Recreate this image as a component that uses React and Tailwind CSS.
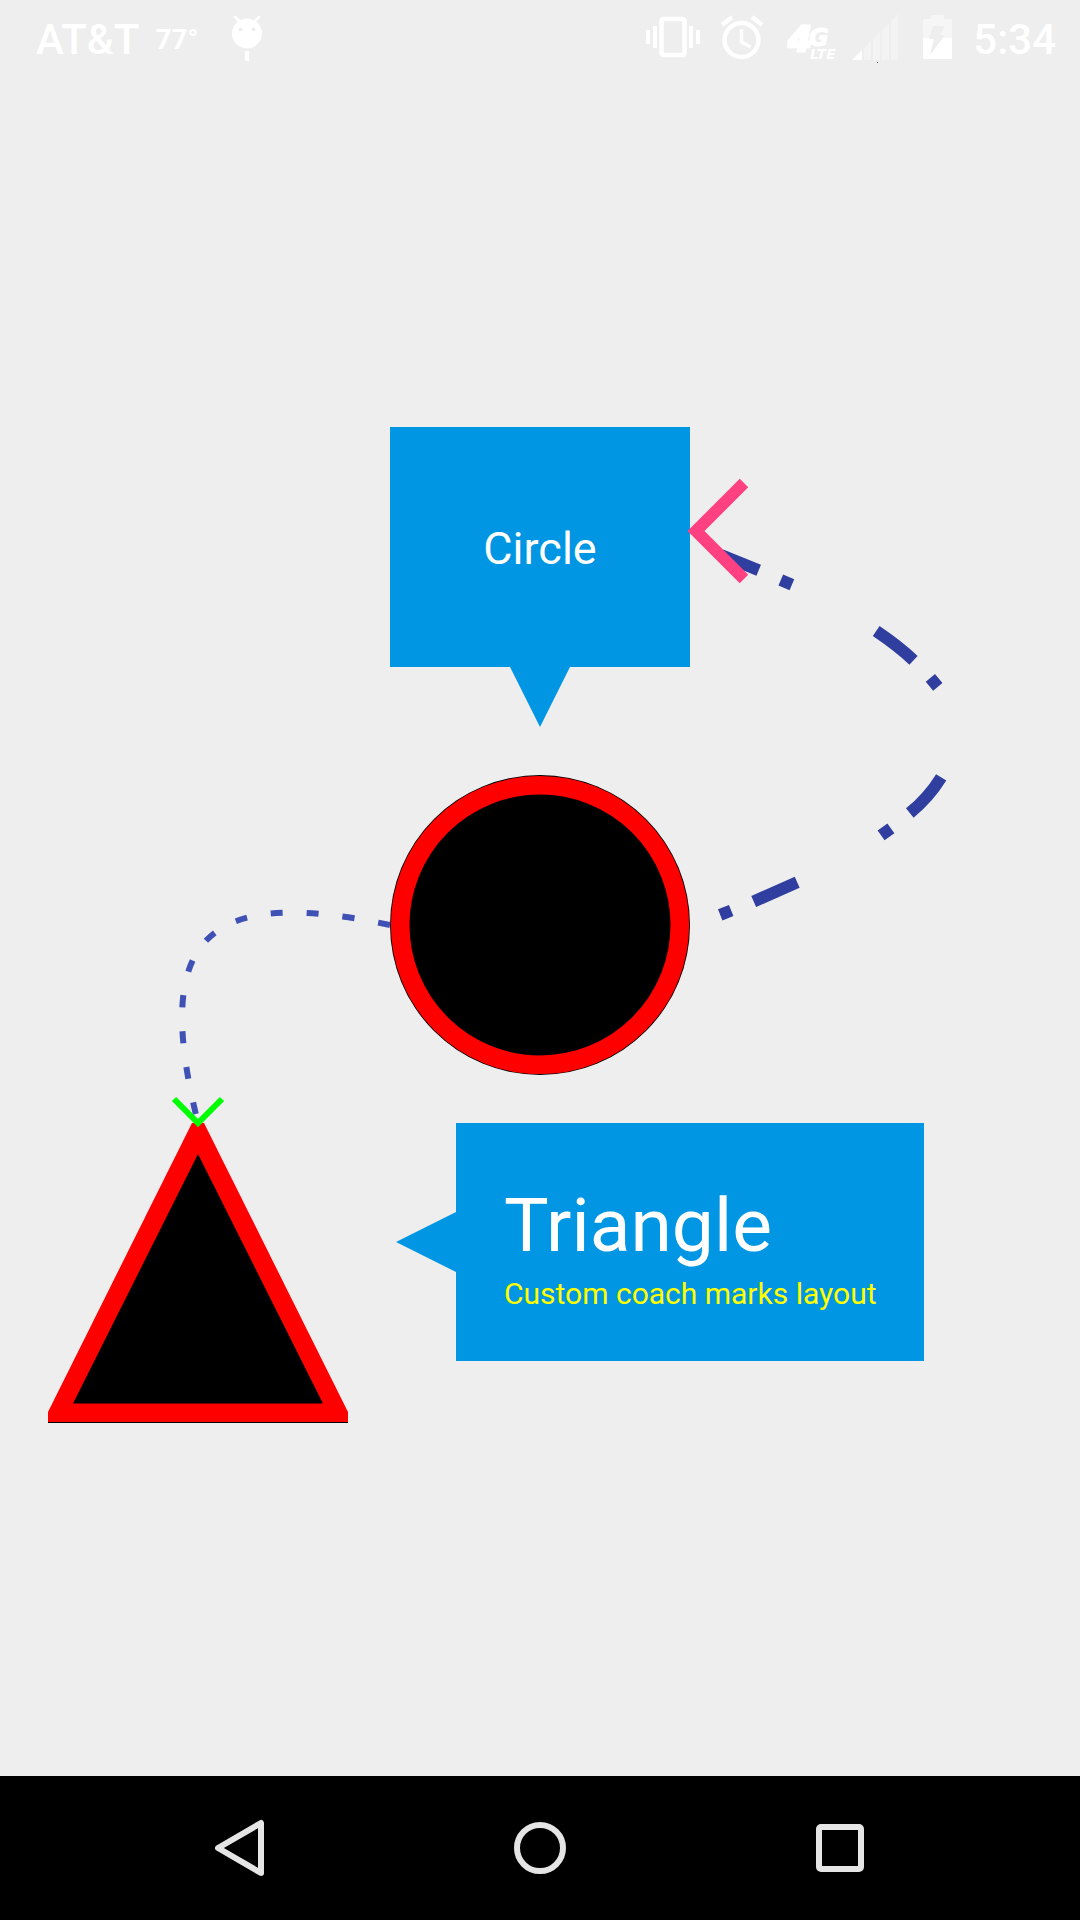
function StatusBar() {
  return (
    <header className="flex h-[75px] items-center justify-between pl-9 pr-6 text-white">
      <div className="flex items-center">
        <span className="pt-1 text-[42px] leading-[50px] font-medium">AT&amp;T</span>
        <span className="ml-4 pt-1 text-[28px] leading-[50px] font-bold">77°</span>
        <svg className="ml-[33px] h-[50px] w-[32px]" viewBox="231 13 32 50" aria-label="Android notification">
          <path d="M235 17l6 6M259 17l-6 6" stroke="white" strokeWidth="2.5" strokeLinecap="round" />
          <circle cx="247" cy="33.5" r="15" fill="white" />
          <circle cx="240.5" cy="29.5" r="2" fill="#eeeeee" />
          <circle cx="253.5" cy="29.5" r="2" fill="#eeeeee" />
          <rect x="245" y="51" width="4" height="10" fill="white" />
        </svg>
      </div>
      <div className="flex items-center">
        <svg className="h-[50px] w-[54px]" viewBox="646 13 54 50" fill="white" aria-label="Vibrate">
          <rect x="661.5" y="19" width="23" height="36" rx="2" fill="none" stroke="white" strokeWidth="4.5" />
          <path d="M646 30h4v14h-4zM653 26h4v22h-4zM689 26h4v22h-4zM696 30h4v14h-4z" />
        </svg>
        <svg className="ml-5 h-[50px] w-[44px]" viewBox="720 13 44 50" fill="none" stroke="white" aria-label="Alarm">
          <circle cx="741.5" cy="40" r="17" strokeWidth="4.5" />
          <path d="M741.5 29v13l9 5" strokeWidth="3.5" />
          <path d="M722 25l10-8M762 25l-10-8" strokeWidth="4.5" />
        </svg>
        <svg className="ml-[23px] h-[50px] w-[52px]" viewBox="787 13 52 50" aria-label="4G LTE">
          <text fill="white" fontFamily="DejaVu Sans" fontStyle="italic" fontWeight="700">
            <tspan x="788" y="51" fontSize="34" stroke="white" strokeWidth="3">4</tspan>
            <tspan x="809" y="46" fontSize="24" stroke="white" strokeWidth="1">G</tspan>
            <tspan x="810" y="59" fontSize="14">LTE</tspan>
          </text>
        </svg>
        <svg className="ml-3 h-[50px] w-[48px]" viewBox="851 13 48 50" aria-label="Signal strength">
          <path d="M864 48l7-7v19h-7zM873 39l7-7v28h-7zM882 30l7-7v37h-7zM891 21l7-7v46h-7z" fill="#f3f3f3" />
          <path d="M852 60l10-10v10z" fill="white" />
          <rect x="877" y="62" width="1" height="1" fill="#555555" />
        </svg>
        <svg className="ml-6 h-[50px] w-[30px]" viewBox="923 13 30 50" aria-label="Battery charging">
          <path d="M923 19h8v-4h13v4h8v19h-29z" fill="#f6f6f6" />
          <path d="M923 38h29v21h-29z" fill="white" />
          <path d="M933 26h12l-5 9h5l-15 20 4-16h-5z" fill="#eeeeee" />
        </svg>
        <time className="ml-5 pt-1 text-[42px] leading-[50px] font-medium">5:34</time>
      </div>
    </header>
  );
}

function CircleMark() {
  return (
    <section className="flex flex-col items-center">
      <div className="flex h-60 w-[300px] items-center justify-center bg-[#0096e3] pt-1 text-[45px] leading-[54px] text-white">
        Circle
      </div>
      <svg className="h-[60px] w-[60px]" viewBox="0 0 60 60" aria-hidden="true">
        <path d="M0 0h60L30 60z" fill="#0096e3" />
      </svg>
      <svg className="mt-12 h-[300px] w-[300px]" viewBox="0 0 300 300" aria-label="Circle shape">
        <circle cx="150" cy="150" r="150" fill="black" />
        <circle cx="150" cy="150" r="139.8" fill="none" stroke="red" strokeWidth="18.6" />
      </svg>
    </section>
  );
}

function TriangleMark() {
  return (
    <section className="mt-12 flex items-start px-12">
      <svg className="h-[300px] w-[300px] shrink-0" viewBox="0 0 300 300" aria-label="Triangle shape">
        <path d="M0 290v10h300v-10z" fill="black" />
        <path d="M144 0h12l144 289v10H0v-10z" fill="red" />
        <path d="M150 31l125 249.5H25z" fill="black" />
      </svg>
      <div className="ml-12 flex items-center">
        <svg className="h-[60px] w-[60px] shrink-0" viewBox="0 0 60 60" aria-hidden="true">
          <path d="M60 0v60L0 30z" fill="#0096e3" />
        </svg>
        <div className="bg-[#0096e3] px-12 pt-[52px] pb-12">
          <h1 className="text-[75px] leading-[100px] text-white">Triangle</h1>
          <p className="text-[30px] leading-[38px] whitespace-nowrap text-[#ffff00]">Custom coach marks layout</p>
        </div>
      </div>
    </section>
  );
}

/* Dashed arrows that join the marks, drawn over them. */
function Connectors() {
  return (
    <svg className="pointer-events-none absolute top-0 left-0 h-[1000px] w-[1080px]" viewBox="0 427 1080 1000" fill="none" aria-hidden="true">
      <path d="M390 925C206 886 151 936 198 1123" stroke="#3f51b5" strokeWidth="6" strokeDasharray="12 24" />
      <path d="M174 1099L198 1123L222 1099" stroke="#00ff00" strokeWidth="6" />
      <path
        d="M721 555L758.7 570.3M780.8 580L791.9 584.7M876.2 631Q899 646.5 913.5 660.3M930.4 677.9L937.8 686.9M941.2 777.3Q928.7 797.5 909.8 813M890.9 828.3L881.1 835.3M797.2 882.2L753.7 901.5M731.2 910.5L720.2 914.9"
        stroke="#303f9f"
        strokeWidth="12"
      />
      <path d="M744 483L696 531L744 579" stroke="#ff4081" strokeWidth="12" />
    </svg>
  );
}

function NavBar() {
  return (
    <nav className="grid h-36 grid-cols-3 bg-black px-[90px]">
      <button type="button" aria-label="Back" className="flex items-center justify-center">
        <svg className="h-[60px] w-[60px]" viewBox="210 1818 60 60" fill="none" stroke="#e5e5e5" strokeWidth="6" strokeLinejoin="round">
          <path d="M261 1823v50L218 1848z" />
        </svg>
      </button>
      <button type="button" aria-label="Home" className="flex items-center justify-center">
        <svg className="h-[60px] w-[60px]" viewBox="0 0 60 60" fill="none" stroke="#e5e5e5" strokeWidth="6">
          <circle cx="30" cy="30" r="23" />
        </svg>
      </button>
      <button type="button" aria-label="Recent apps" className="flex items-center justify-center">
        <svg className="h-[60px] w-[60px]" viewBox="0 0 60 60" fill="none" stroke="#e5e5e5" strokeWidth="6">
          <rect x="9" y="9" width="42" height="42" rx="2" />
        </svg>
      </button>
    </nav>
  );
}

export default function App() {
  return (
    <div className="flex min-h-screen flex-col bg-[#eeeeee] font-['Roboto',sans-serif]">
      <StatusBar />
      <main className="flex-1 pt-88">
        <div className="relative mx-auto w-full max-w-[1080px]">
          <CircleMark />
          <TriangleMark />
          <Connectors />
        </div>
      </main>
      <NavBar />
    </div>
  );
}
